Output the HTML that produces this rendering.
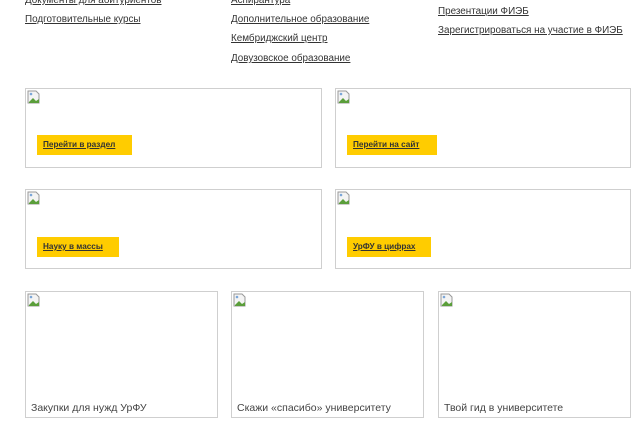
<!DOCTYPE html>
<html><head><meta charset="utf-8"><style>
body{margin:0;width:640px;height:426px;overflow:hidden;background:#fff;font-family:"Liberation Sans",sans-serif;position:relative}
a{color:#333;text-decoration:underline}
.l{position:absolute;font-size:9.9px;color:#333;white-space:nowrap}
.b{position:absolute;border:1px solid #cfcfcf;box-sizing:border-box;background:#fff}
.ic{position:absolute;left:1px;top:1px}
.y{position:absolute;background:#ffcc00;height:20px;font-size:8.2px;font-weight:bold;line-height:20px;padding-left:6px;box-sizing:border-box;color:#333}
.c{position:absolute;left:5px;bottom:3px;font-size:10.5px;color:#444;white-space:nowrap}
</style></head><body>
<svg width="0" height="0" style="position:absolute"><defs><g id="i"><path d="M1 1h8l3 3v9H1z" fill="#f4f4f4" stroke="#999" stroke-width="1"/><path d="M2 12l4-4 3 3 3-2v4H2z" fill="#5a9e3a"/><circle cx="4" cy="4" r="1.3" fill="#7aa6d8"/></g></defs></svg>
<div class="l" style="left:25px;top:-5px"><a>Документы для абитуриентов</a></div>
<div class="l" style="left:25px;top:14px"><a>Подготовительные курсы</a></div>
<div class="l" style="left:231px;top:-5px"><a>Аспирантура</a></div>
<div class="l" style="left:231px;top:14px"><a>Дополнительное образование</a></div>
<div class="l" style="left:231px;top:33px"><a>Кембриджский центр</a></div>
<div class="l" style="left:231px;top:53px"><a>Довузовское образование</a></div>
<div class="l" style="left:438px;top:6px"><a>Презентации ФИЭБ</a></div>
<div class="l" style="left:438px;top:25px"><a>Зарегистрироваться на участие в ФИЭБ</a></div>

<div class="b" style="left:25px;top:88px;width:297px;height:80px"><svg class="ic" width="14" height="14"><use href="#i"/></svg><div class="y" style="left:11px;top:46px;width:95px"><a>Перейти в раздел</a></div></div>
<div class="b" style="left:335px;top:88px;width:296px;height:80px"><svg class="ic" width="14" height="14"><use href="#i"/></svg><div class="y" style="left:11px;top:46px;width:90px"><a>Перейти на сайт</a></div></div>
<div class="b" style="left:25px;top:189px;width:297px;height:80px"><svg class="ic" width="14" height="14"><use href="#i"/></svg><div class="y" style="left:11px;top:47px;width:82px"><a>Науку в массы</a></div></div>
<div class="b" style="left:335px;top:189px;width:296px;height:80px"><svg class="ic" width="14" height="14"><use href="#i"/></svg><div class="y" style="left:11px;top:47px;width:84px"><a>УрФУ в цифрах</a></div></div>

<div class="b" style="left:25px;top:291px;width:193px;height:127px"><svg class="ic" width="14" height="14"><use href="#i"/></svg><div class="c">Закупки для нужд УрФУ</div></div>
<div class="b" style="left:231px;top:291px;width:193px;height:127px"><svg class="ic" width="14" height="14"><use href="#i"/></svg><div class="c">Скажи «спасибо» университету</div></div>
<div class="b" style="left:438px;top:291px;width:193px;height:127px"><svg class="ic" width="14" height="14"><use href="#i"/></svg><div class="c">Твой гид в университете</div></div>
</body></html>
